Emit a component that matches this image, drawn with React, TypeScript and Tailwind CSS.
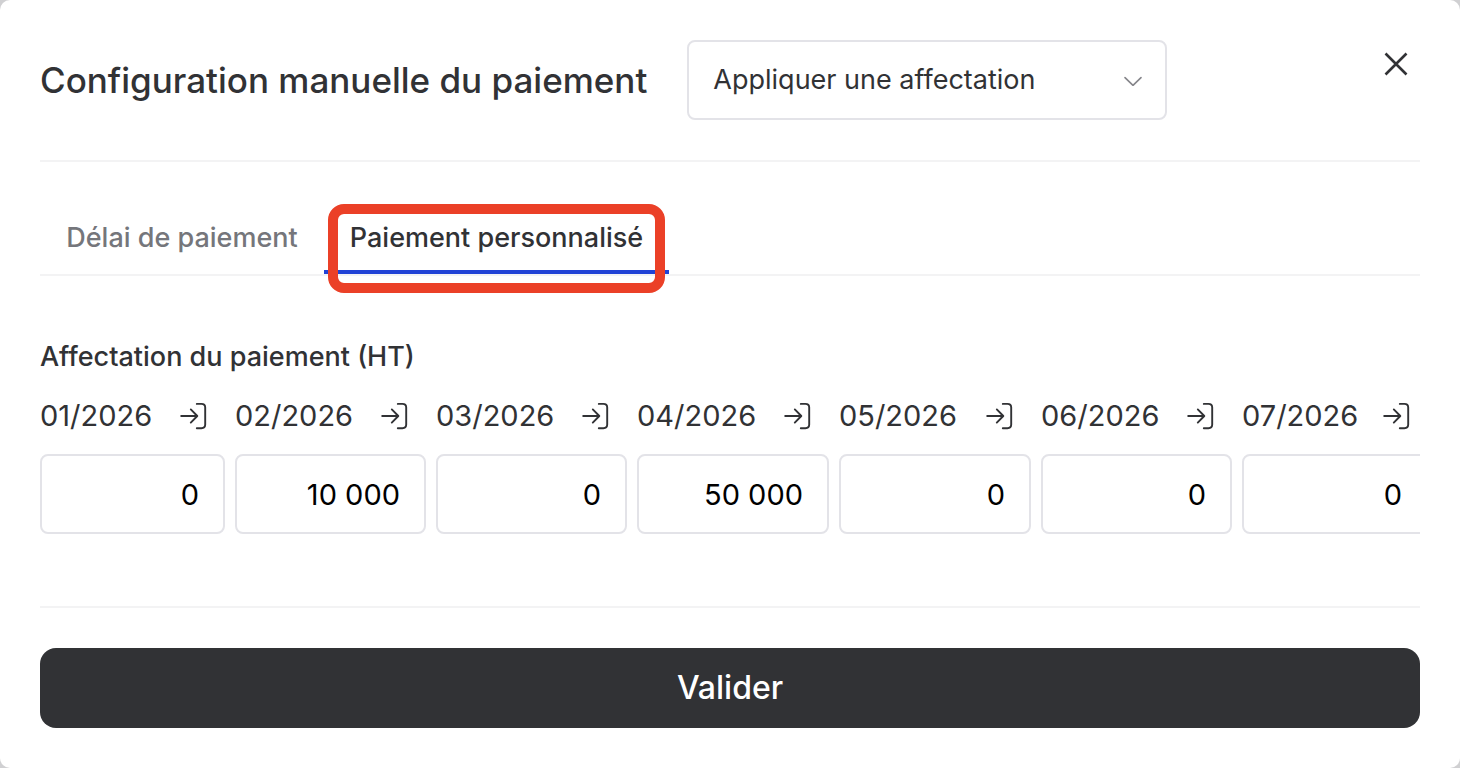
import React from "react";

const months = [
  { label: "01/2026", amount: "0", width: "w-[185px]" },
  { label: "02/2026", amount: "10 000", width: "w-[191px]" },
  { label: "03/2026", amount: "0", width: "w-[191px]" },
  { label: "04/2026", amount: "50 000", width: "w-[192px]" },
  { label: "05/2026", amount: "0", width: "w-[192px]" },
  { label: "06/2026", amount: "0", width: "w-[191px]" },
  { label: "07/2026", amount: "0", width: "w-[186px]" },
];

function CloseIcon() {
  return (
    <svg className="size-6" viewBox="0 0 24 24" fill="none" stroke="currentColor" strokeWidth="2.6" aria-hidden="true">
      <path d="M1.5 1.5 22.5 22.5M22.5 1.5 1.5 22.5" />
    </svg>
  );
}

function ChevronIcon() {
  return (
    <svg
      className="pointer-events-none absolute top-1/2 right-6 h-3 w-5 -translate-y-1/2 text-[#85858a]"
      viewBox="0 0 20 12"
      fill="none"
      stroke="currentColor"
      strokeWidth="1.6"
      strokeLinecap="round"
      strokeLinejoin="round"
      aria-hidden="true"
    >
      <path d="M2 3.6 10 11.4 18 3.6" />
    </svg>
  );
}

function FillRightIcon() {
  return (
    <svg
      className="h-7 w-7"
      viewBox="0 0 28 28"
      fill="none"
      stroke="currentColor"
      strokeWidth="1.9"
      strokeLinecap="round"
      strokeLinejoin="round"
      aria-hidden="true"
    >
      <path d="M1.2 14H17M10.8 7.4 17.3 14 10.8 20.6" />
      <path d="M16.8 1.9H21.4Q25.2 1.9 25.2 5.4V22.6Q25.2 26.2 21.4 26.2H16.8" />
    </svg>
  );
}

export default function App() {
  return (
    <div className="min-h-screen bg-[#d0d0d2] font-['Inter','Liberation_Sans',sans-serif] text-[#313235]">
      <main className="min-h-screen rounded-[10px] bg-white p-10">
        <header className="flex items-start border-b-2 border-[#f3f3f4] pb-10">
          <div className="flex flex-1 items-center gap-10">
            <h1 className="text-[35px] leading-[44px] font-medium whitespace-nowrap">
              Configuration manuelle du paiement
            </h1>
            <div className="relative w-[480px]">
              <select
                aria-label="Appliquer une affectation"
                className="h-20 w-full appearance-none rounded-lg border-2 border-[#e3e3e8] bg-white px-6 text-[27px]"
              >
                <option>Appliquer une affectation</option>
              </select>
              <ChevronIcon />
            </div>
          </div>
          <button type="button" aria-label="Fermer" className="flex size-12 items-center justify-center">
            <CloseIcon />
          </button>
        </header>

        <div role="tablist" className="mt-10 flex border-b-2 border-[#f3f3f4] text-[27px] leading-[36px] font-medium">
          <button
            type="button"
            role="tab"
            aria-selected="false"
            className="min-w-[284px] px-6 pt-[18px] pb-[18px] text-[#75767b]"
          >
            Délai de paiement
          </button>
          <button
            type="button"
            role="tab"
            aria-selected="true"
            className="relative min-w-[345px] border-b-4 border-[#2143d6] px-6 pt-[18px] pb-[14px]"
          >
            Paiement personnalisé
            <span className="pointer-events-none absolute -bottom-[23px] inset-x-1 h-[89px] rounded-2xl border-10 border-[#eb4027]" />
          </button>
        </div>

        <section className="pt-16">
          <h2 className="text-[27px] leading-[34px] font-medium">Affectation du paiement (HT)</h2>
          <div className="mt-[22px] flex gap-[10px] overflow-hidden">
            {months.map((month) => (
              <div key={month.label} className={`shrink-0 ${month.width}`}>
                <div className="flex h-10 items-center justify-between pr-[17px] text-[29px]">
                  <label htmlFor={month.label}>{month.label}</label>
                  <button type="button" aria-label={`Affecter le solde à ${month.label}`}>
                    <FillRightIcon />
                  </button>
                </div>
                <input
                  id={month.label}
                  type="text"
                  inputMode="numeric"
                  defaultValue={month.amount}
                  className="mt-[18px] block h-20 w-full rounded-lg border-2 border-[#e3e3e8] pr-6 text-right text-[29px] text-black"
                />
              </div>
            ))}
          </div>
        </section>

        <footer className="mt-[72px] border-t-2 border-[#f3f3f4] pt-10">
          <button type="button" className="h-20 w-full rounded-2xl bg-[#313235] text-[32px] font-medium text-white">
            Valider
          </button>
        </footer>
      </main>
    </div>
  );
}
